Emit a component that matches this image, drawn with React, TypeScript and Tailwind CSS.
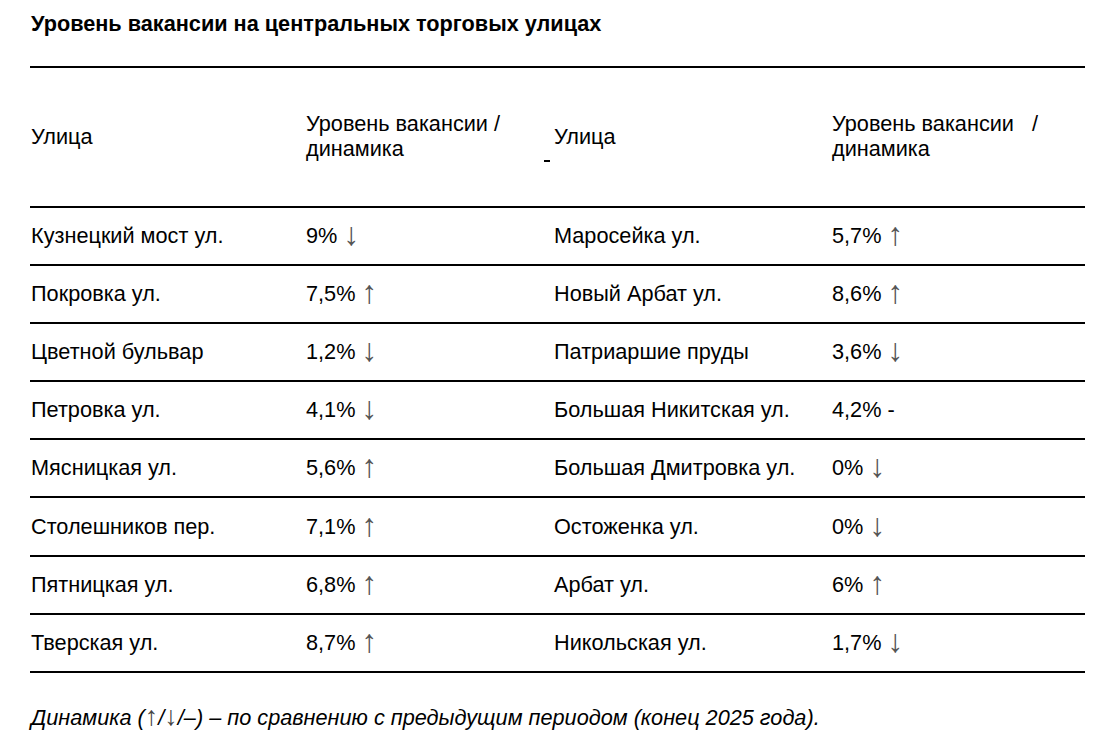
import React from 'react';

const left: [string, string][] = [
  ['Кузнецкий мост ул.', '9% ↓'],
  ['Покровка ул.', '7,5% ↑'],
  ['Цветной бульвар', '1,2% ↓'],
  ['Петровка ул.', '4,1% ↓'],
  ['Мясницкая ул.', '5,6% ↑'],
  ['Столешников пер.', '7,1% ↑'],
  ['Пятницкая ул.', '6,8% ↑'],
  ['Тверская ул.', '8,7% ↑'],
];

const right: [string, string][] = [
  ['Маросейка ул.', '5,7% ↑'],
  ['Новый Арбат ул.', '8,6% ↑'],
  ['Патриаршие пруды', '3,6% ↓'],
  ['Большая Никитская ул.', '4,2% -'],
  ['Большая Дмитровка ул.', '0% ↓'],
  ['Остоженка ул.', '0% ↓'],
  ['Арбат ул.', '6% ↑'],
  ['Никольская ул.', '1,7% ↓'],
];

// arrows in the source are tall and thin, so they get a bigger size and a grey tone
function Value({ text }: { text: string }) {
  const last = text.slice(-1);
  if (last !== '↑' && last !== '↓') return <>{text}</>;
  return (
    <>
      {text.slice(0, -1)}
      <span className="text-[32px] leading-[0] text-[#555] align-[-2px]">{last}</span>
    </>
  );
}

export default function App() {
  return (
    <div className="min-h-screen bg-white text-black font-['Liberation_Sans',Arial,sans-serif] pl-[30px] pr-[18px] pt-[12px]">
      <h1 className="text-[21.7px] font-bold leading-[24px] pl-[1px]">Уровень вакансии на центральных торговых улицах</h1>

      <div className="mt-[30px] border-t-2 border-black">
        {/* header */}
        <div className="grid grid-cols-[275px_248px_278px_1fr] h-[140px] items-center text-[21.7px] leading-[25px] border-b-2 border-black">
          <div className="pl-[1px] -mt-[2px]">Улица</div>
          <div className="pl-[1px] -mt-[2px]">Уровень вакансии /<br />динамика</div>
          <div className="pl-[1px] -mt-[2px] relative">
            Улица
            <span className="absolute left-[-9px] top-[36px] w-[6px] h-[2px] bg-black" />
          </div>
          <div className="pl-[1px] -mt-[2px] whitespace-pre">Уровень вакансии   /<br />динамика</div>
        </div>

        {/* rows */}
        {left.map((row, i) => (
          <div key={i} className="grid grid-cols-[275px_248px_278px_1fr] h-[58.1px] items-center text-[21.7px] leading-[24px] border-b-2 border-black">
            <div className="pl-[1px]">{row[0]}</div>
            <div className="pl-[1px]"><Value text={row[1]} /></div>
            <div className="pl-[1px]">{right[i][0]}</div>
            <div className="pl-[1px]"><Value text={right[i][1]} /></div>
          </div>
        ))}
      </div>

      <p className="mt-[33px] pl-[1px] text-[21.7px] italic leading-[24px]">
        Динамика (<span className="text-[27px] leading-[0] text-[#444]">↑</span>/<span className="text-[27px] leading-[0] text-[#444]">↓</span>/–) – по сравнению с предыдущим периодом (конец 2025 года).
      </p>
    </div>
  );
}
